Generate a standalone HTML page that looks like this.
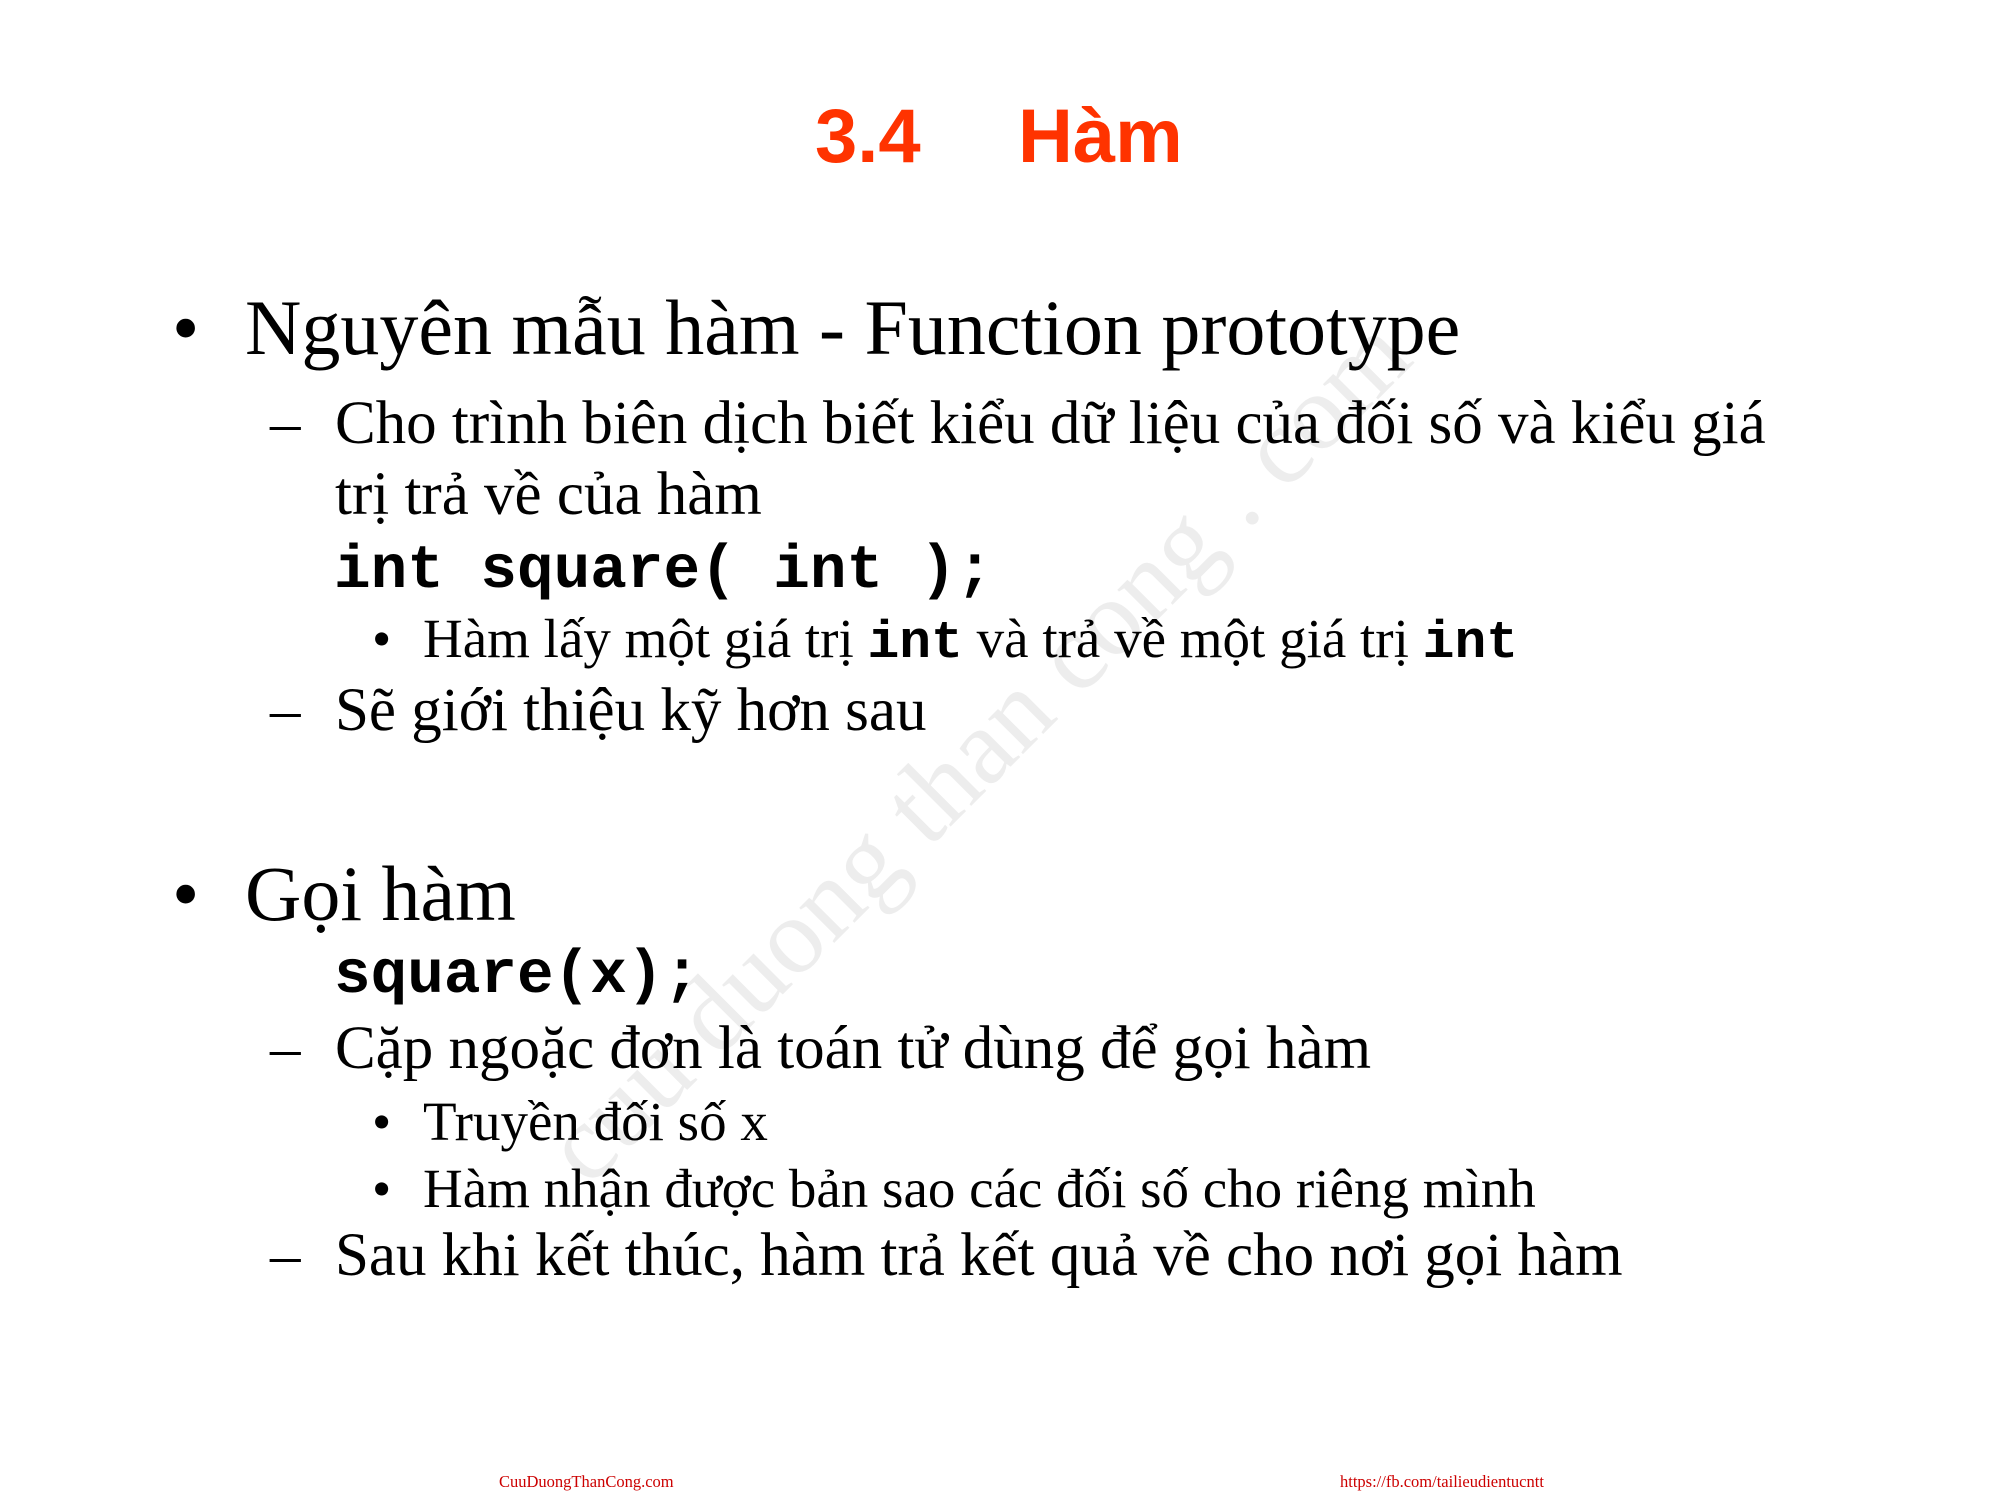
<!DOCTYPE html>
<html><head><meta charset="utf-8"><style>
html,body{margin:0;padding:0;background:#fff;}
body{width:2000px;height:1500px;position:relative;overflow:hidden;}
.t{position:absolute;white-space:nowrap;line-height:1;font-family:"Liberation Serif","Noto Serif CJK SC",serif;color:#000;}
.m{font-family:"Liberation Mono",monospace;font-weight:bold;}
.wm{position:absolute;font-family:"Liberation Serif",serif;font-size:108px;color:#ededed;transform:rotate(-45deg);transform-origin:0 0;white-space:nowrap;}
</style></head><body>
<div class="wm" style="left:520px;top:1120px;">cuu duong than cong . com</div>
<div class="t" style="left:815px;top:99px;font-family:'Liberation Sans',sans-serif;font-weight:bold;font-size:76px;color:#ff3300;">3.4</div>
<div class="t" style="left:1018px;top:99px;font-family:'Liberation Sans',sans-serif;font-weight:bold;font-size:76px;color:#ff3300;">Hàm</div>

<div class="t" style="left:172px;top:289px;font-size:78px;">•</div>
<div class="t" style="left:245px;top:289px;font-size:78px;">Nguyên mẫu hàm - Function prototype</div>

<div class="t" style="left:270px;top:393px;font-size:61px;">–</div>
<div class="t" style="left:335px;top:393px;font-size:61px;">Cho trình biên dịch biết kiểu dữ liệu của đối số và kiểu giá</div>
<div class="t" style="left:335px;top:464px;font-size:61px;">trị trả về của hàm</div>
<div class="t m" style="left:334px;top:541px;font-size:61px;">int square( int );</div>

<div class="t" style="left:372px;top:611px;font-size:55px;">•</div>
<div class="t" style="left:423px;top:611px;font-size:55px;">Hàm lấy một giá trị <span class="m" style="font-size:53px;">int</span> và trả về một giá trị <span class="m" style="font-size:53px;">int</span></div>

<div class="t" style="left:270px;top:680px;font-size:61px;">–</div>
<div class="t" style="left:335px;top:680px;font-size:61px;">Sẽ giới thiệu kỹ hơn sau</div>

<div class="t" style="left:172px;top:855px;font-size:78px;">•</div>
<div class="t" style="left:245px;top:855px;font-size:78px;">Gọi hàm</div>
<div class="t m" style="left:334px;top:946px;font-size:61px;">square(x);</div>

<div class="t" style="left:270px;top:1018px;font-size:61px;">–</div>
<div class="t" style="left:335px;top:1018px;font-size:61px;">Cặp ngoặc đơn là toán tử dùng để gọi hàm</div>
<div class="t" style="left:372px;top:1094px;font-size:55px;">•</div>
<div class="t" style="left:423px;top:1094px;font-size:55px;">Truyền đối số x</div>
<div class="t" style="left:372px;top:1161px;font-size:55px;">•</div>
<div class="t" style="left:423px;top:1161px;font-size:55px;">Hàm nhận được bản sao các đối số cho riêng mình</div>
<div class="t" style="left:270px;top:1225px;font-size:61px;">–</div>
<div class="t" style="left:335px;top:1225px;font-size:61px;">Sau khi kết thúc, hàm trả kết quả về cho nơi gọi hàm</div>

<div class="t" style="left:499px;top:1474px;font-size:16.5px;color:#cc0000;">CuuDuongThanCong.com</div>
<div class="t" style="left:1340px;top:1474px;font-size:16.5px;color:#cc0000;">https://fb.com/tailieudientucntt</div>
</body></html>
